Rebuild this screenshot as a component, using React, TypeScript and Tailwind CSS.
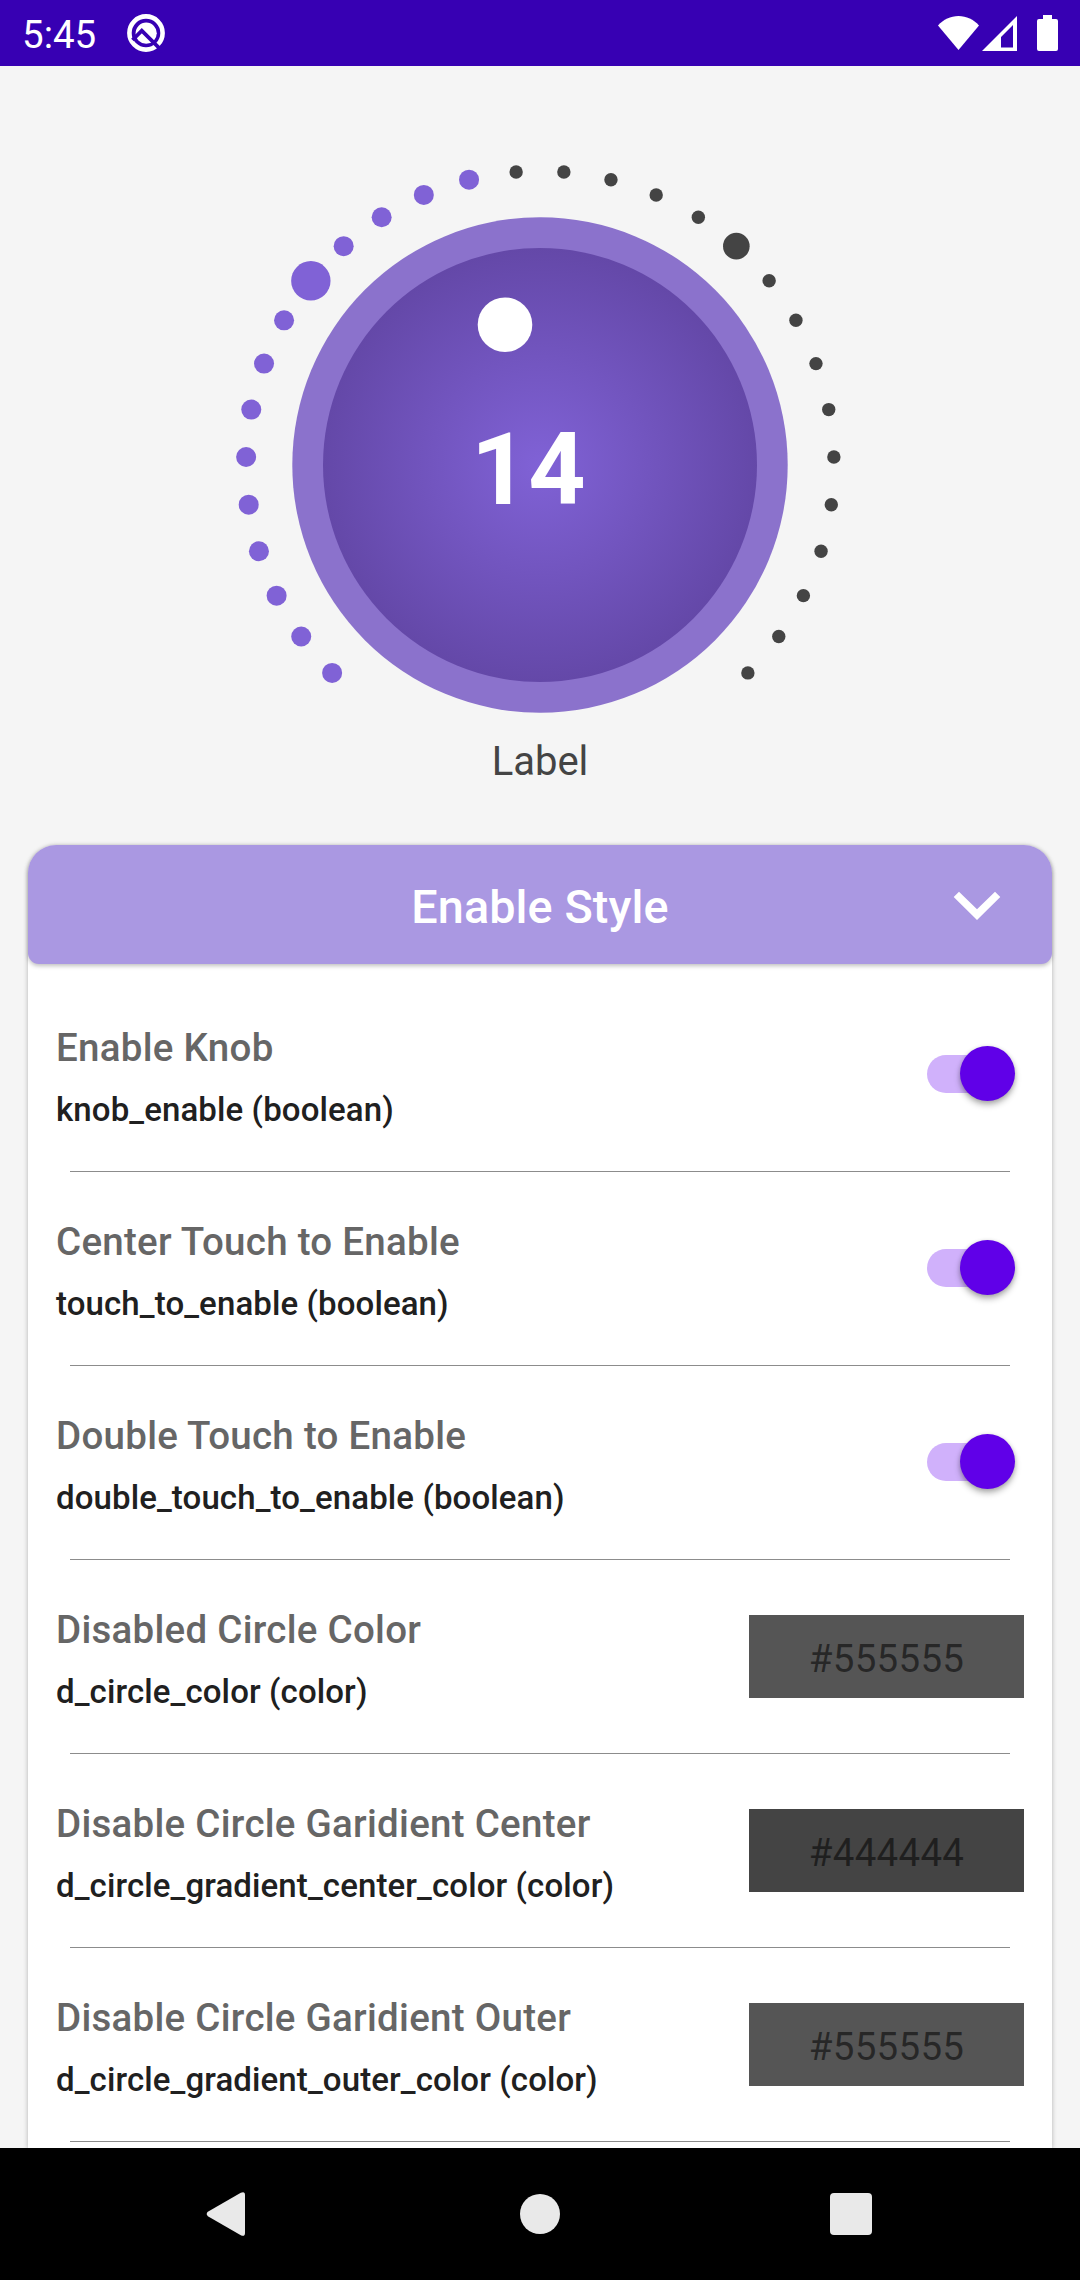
type Row = {
  title: string;
  attr: string;
  color?: string;
  swatch?: string;
};

const ROWS: Row[] = [
  { title: "Enable Knob", attr: "knob_enable (boolean)" },
  { title: "Center Touch to Enable", attr: "touch_to_enable (boolean)" },
  { title: "Double Touch to Enable", attr: "double_touch_to_enable (boolean)" },
  { title: "Disabled Circle Color", attr: "d_circle_color (color)", color: "#555555", swatch: "bg-[#555555]" },
  { title: "Disable Circle Garidient Center", attr: "d_circle_gradient_center_color (color)", color: "#444444", swatch: "bg-[#444444]" },
  { title: "Disable Circle Garidient Outer", attr: "d_circle_gradient_outer_color (color)", color: "#555555", swatch: "bg-[#555555]" },
];

function StatusBar() {
  return (
    <header className="flex h-[66px] shrink-0 items-center bg-[#3700b3] pl-[22px] pr-[22px] text-white">
      <span className="pt-1 text-[38.5px] leading-[62px]">5:45</span>
      <svg className="ml-[30px] h-10 w-10" viewBox="0 0 40 40">
        <circle cx="20" cy="20" r="16.6" fill="none" stroke="#fff" strokeWidth="4.6" />
        <circle cx="20.2" cy="20.2" r="10.6" fill="#fff" />
        <path d="M6.500 27 15.800 17.600 37 38.800" fill="none" stroke="#3700b3" strokeWidth="3.800" />
      </svg>
      <svg className="ml-auto h-[34px] w-[41px]" viewBox="0 0 41 34">
        <path d="M0 9.500C5.500 3.500 12.500 0 20.500 0S35.500 3.500 41 9.500L20.500 34z" fill="#fff" />
      </svg>
      <svg className="ml-[3px] h-[35px] w-[35px]" viewBox="0 0 35 35">
        <path fillRule="evenodd" d="M0 35 35 0v35zM19 21v10.500h12V9z" fill="#fff" />
      </svg>
      <svg className="ml-5 h-9 w-[21px]" viewBox="0 0 21 36">
        <path d="M6 0h9v4h4a2 2 0 0 1 2 2v28a2 2 0 0 1-2 2H2a2 2 0 0 1-2-2V6a2 2 0 0 1 2-2h4z" fill="#fff" />
      </svg>
    </header>
  );
}

const VALUE = 14;

function Dial() {
  const dots = Array.from({ length: 30 }, (_, i) => {
    const a = ((45 + (i * 270) / 29) * Math.PI) / 180;
    const active = i < VALUE;
    const big = i === 9 || i === 19;
    return {
      x: 300 - 294 * Math.sin(a),
      y: 300 + 294 * Math.cos(a),
      r: active ? (big ? 19.7 : 10) : big ? 13.3 : 6.7,
      fill: active ? "#8062d6" : "#444444",
    };
  });
  return (
    <section className="flex h-[779px] shrink-0 flex-col items-center pt-[99px]">
      <svg className="h-[600px] w-[600px] overflow-visible" viewBox="0 0 600 600">
        <defs>
          <radialGradient id="dialFill">
            <stop offset="0" stopColor="#8062d6" />
            <stop offset="1" stopColor="#6448a8" />
          </radialGradient>
        </defs>
        {dots.map((d, i) => (
          <circle key={i} cx={d.x} cy={d.y} r={d.r} fill={d.fill} />
        ))}
        <circle cx="300" cy="300" r="247.700" fill="#8b72cc" />
        <circle cx="300" cy="300" r="217" fill="url(#dialFill)" />
        <circle cx="265" cy="159.700" r="27.300" fill="#fff" />
        <text x="231" y="339" fill="#fff" fontSize="100" fontWeight="700">
          {VALUE}
        </text>
      </svg>
      <p className="-mt-[29px] text-[40px] leading-[52px] text-[#444]">Label</p>
    </section>
  );
}

function Toggle() {
  return (
    <div className="mr-[9px] flex h-[55px] w-[88px] items-center">
      <div className="-mt-px h-[38px] w-[80px] rounded-full bg-[#d0b1fb]">
        <div className="-mt-[9px] ml-[32.500px] h-[55px] w-[55px] rounded-full bg-[#6000e8] shadow-[0_4px_6px_rgba(0,0,0,0.28),0_1px_4px_rgba(0,0,0,0.15)]" />
      </div>
    </div>
  );
}

function SettingRow({ row }: { row: Row }) {
  return (
    <div className="h-[194px] shrink-0">
      <div className="flex h-[193px] items-center pl-7 pr-7">
        <div className="grow self-start pt-11">
          <h3 className="text-[38.5px] font-medium leading-[52px] tracking-[0.275px] text-[#666]">{row.title}</h3>
          <p className="mt-[14px] text-[33px] font-medium leading-[44px] tracking-[0.11px] text-[#202020]">{row.attr}</p>
        </div>
        {row.color ? (
          <div className={`flex h-[83px] w-[275px] items-center justify-center pt-1.5 text-[38.5px] leading-none tracking-[0.275px] text-black/55 ${row.swatch}`}>
            {row.color}
          </div>
        ) : (
          <Toggle />
        )}
      </div>
      <div className="mx-[42px] h-px bg-[#8c8c8c]" />
    </div>
  );
}

function NavBar() {
  return (
    <nav className="flex h-[132px] shrink-0 items-center justify-between bg-black pl-[206px] pr-[208px]">
      <svg className="h-[46px] w-[39px]" viewBox="0 0 40 46">
        <path d="M1.900 20.700 35.700 1.200Q40 -.7 40 3.500V42.500Q40 46.700 35.700 44.800L1.900 25.300Q-.5 23 1.900 20.700z" fill="#e9e9e9" />
      </svg>
      <div className="ml-[4px] h-10 w-10 rounded-full bg-[#e9e9e9]" />
      <div className="h-[42px] w-[42px] rounded-[4px] bg-[#e9e9e9]" />
    </nav>
  );
}

export default function App() {
  return (
    <div className="flex h-[2280px] w-[1080px] flex-col overflow-hidden bg-[#f5f5f5] font-['Roboto',sans-serif]">
      <StatusBar />
      <Dial />
      <main className="min-h-0 grow px-7">
        <div className="flex h-full flex-col rounded-t-[28px] bg-white shadow-[0_1px_5px_rgba(0,0,0,0.28)]">
          <div className="flex h-[119px] shrink-0 items-center rounded-b-[11px] rounded-t-[28px] bg-[#aa98e2] pl-[99px] pr-[51px] shadow-[0_2px_4px_rgba(0,0,0,0.25)]">
            <h2 className="grow pt-1 text-center text-[46.75px] font-medium leading-[60px] tracking-[0.1px] text-white">Enable Style</h2>
            <svg className="h-[30px] w-[48px]" viewBox="0 0 48 30">
              <path d="M.7 7 6 1.700 24 19.200 42 1.700 47.300 7 24 30z" fill="#fff" />
            </svg>
          </div>
          <div className="flex flex-col pt-[14px]">
            {ROWS.map((row) => (
              <SettingRow key={row.title} row={row} />
            ))}
          </div>
        </div>
      </main>
      <div className="z-10">
        <NavBar />
      </div>
    </div>
  );
}
